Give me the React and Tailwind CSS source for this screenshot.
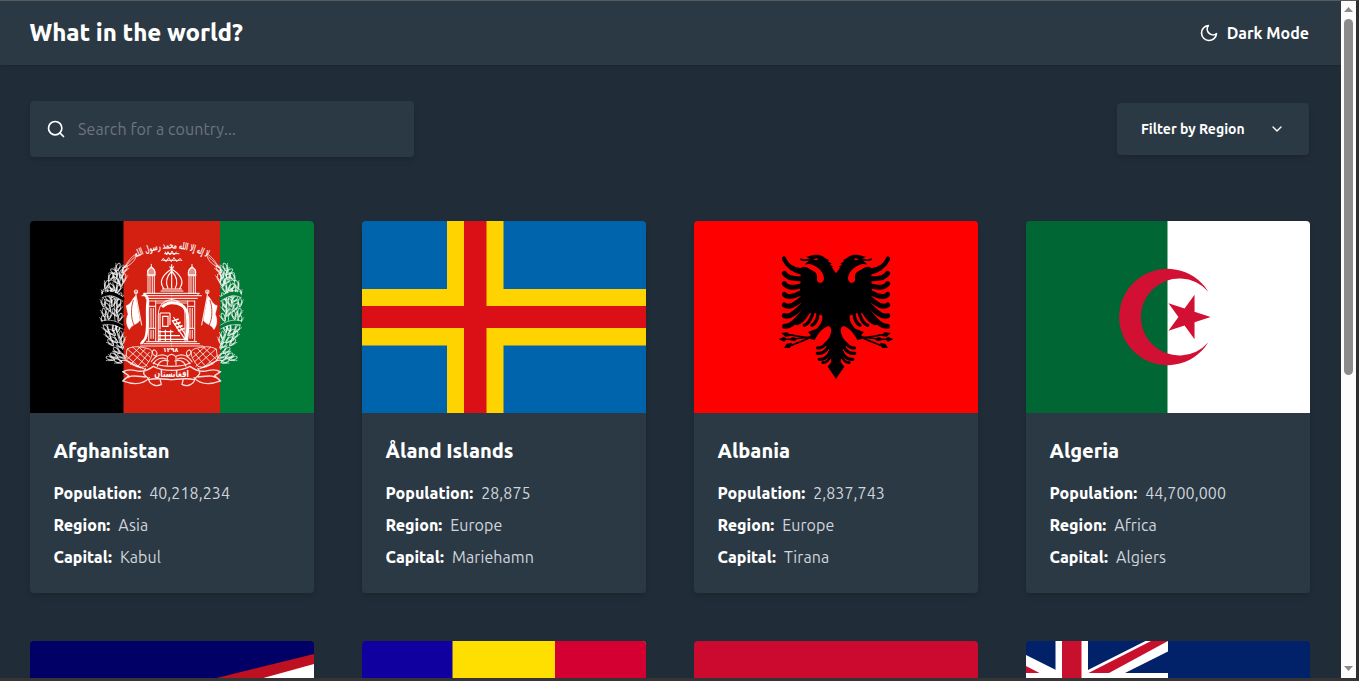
import React from "react";
import { Search, ChevronDown } from "lucide-react";
import { FiMoon } from "react-icons/fi";

function Sheaf({ mirror }) {
  const leaves = [
    [84, 126, 20], [72, 140, -50], [94, 146, 10], [62, 156, 25], [78, 166, -40], [94, 172, 10], [50, 178, 20], [66, 186, -40], [86, 190, 20],
    [42, 204, 10], [56, 222, -45], [40, 232, 0], [70, 232, 20], [88, 214, 30], [54, 246, -30], [86, 250, 20], [42, 262, -10], [74, 262, -30],
    [58, 270, 10], [90, 276, 20], [40, 284, -10], [48, 310, -30], [66, 322, -50], [84, 308, 10], [54, 330, -30], [72, 344, -50], [92, 330, 0],
    [62, 352, -40], [90, 360, -50], [80, 376, -50], [74, 306, 20], [70, 206, 20], [86, 234, 10], [72, 392, -60], [94, 392, -60],
    [102, 158, 10], [104, 132, 30], [76, 152, 0], [58, 196, 0], [98, 344, 0], [60, 400, -70], [84, 408, -70],
  ];
  return (
    <g transform={mirror ? "translate(490 0) scale(-1 1)" : undefined} fill="none" stroke="#fff" strokeOpacity="0.7" strokeWidth="3" strokeLinecap="round">
      {leaves.map(([x, y, r], i) => (
        <g key={i} transform={`translate(${x} ${y}) rotate(${r})`}>
          <ellipse rx="5" ry="12" />
          <path d="M-10 -8 L0 8 L10 -8 M-8 -1 L0 15 L8 -1" strokeWidth="2.4" />
        </g>
      ))}
      <path d="M104 124 C70 180 58 280 98 374" />
      <path d="M40 212 C58 199 78 208 98 222 M40 294 C60 288 80 294 98 306" stroke={mirror ? "#007a36" : "#000"} strokeOpacity="1" strokeWidth="11" />
      <path d="M36 202 C55 188 75 200 98 214 M36 218 C58 206 78 214 98 228 M36 287 C60 282 80 288 98 300 M38 300 C60 296 80 302 98 312" strokeWidth="2.5" />
    </g>
  );
}

function AfghanHalf() {
  return (
    <g fill="none" stroke="#fff" strokeOpacity="0.85" strokeWidth="3.4" strokeLinecap="round" strokeLinejoin="round">
      <path d="M174 205 V152 H193 V205 M180 155 V203 M187 155 V203 M171 150 H196 M174 150 C170 132 178 132 184 126 C190 132 198 134 194 150 M184 126 V118" />
      <path d="M174 150 C170 132 178 132 184 126 C190 132 198 134 194 150Z" fill="#fff" fillOpacity="0.5" />
      <path d="M162 205 H245 M156 212 H245 M168 220 H245 M176 228 H245 M166 205 V212" />
      <path d="M176 228 V350 M183 250 V308 M190 250 V308 M197 228 V350 M176 244 H197 M176 310 H197 M183 316 V340 M190 316 V340 M170 350 H245 M162 356 H245 M152 363 H245" />
      <path d="M205 350 V270 C205 238 225 226 245 224 M200 234 H222" />
      <path d="M138 200 V212 L155 300 M133 200 a5 5 0 1 1 10 0 a5 5 0 1 1 -10 0" />
      <path d="M137 212 C124 222 126 236 108 242 L114 268 C108 280 106 298 118 314 C128 296 142 300 150 286 Z" fill="#fff" strokeWidth="1" />
      <path d="M130 226 C122 248 122 280 132 300" stroke="#d32011" strokeWidth="3" />
      <path d="M104 128 C118 100 130 92 140 86 C138 104 128 116 104 128 C112 118 122 106 134 96" strokeWidth="2.6" />
      <path d="M112 372 C130 362 150 364 178 372 C196 380 182 404 166 424 C150 430 125 424 108 404 Z M112 372 L172 424 M128 366 L176 410 M146 366 L180 396 M106 390 L150 428 M166 372 L122 418 M150 366 L110 404 M178 382 L142 426" strokeWidth="2.8" />
      <path d="M92 408 C112 398 120 420 160 430 M100 440 C130 420 142 458 190 424 C204 432 222 436 245 436 M98 468 C120 446 140 454 166 456 M98 468 C130 480 160 478 178 458 M98 468 L116 452 L98 440 M176 464 C200 458 220 462 245 464 M166 430 C150 452 176 454 176 464 C180 480 200 486 214 478 L210 462 M245 424 C225 424 205 422 190 414" strokeWidth="4" />
      <path d="M184 410 C198 388 218 386 232 394 M190 416 C200 400 216 396 228 402 M202 424 C208 408 222 404 236 408 M196 394 C186 388 184 378 192 374 C202 378 204 388 196 394 M232 420 V396 C238 388 242 388 245 388" />
    </g>
  );
}

function Afghanistan() {
  return (
    <svg viewBox="0 0 284 192" className="block h-full w-full">
      <rect width="284" height="192" fill="#000" />
      <rect x="93.5" width="97" height="192" fill="#d32011" />
      <rect x="190" width="94" height="192" fill="#007a36" />
      <g transform="translate(60 4) scale(.33333)">
        <Sheaf />
        <Sheaf mirror />
        <AfghanHalf />
        <g transform="translate(490 0) scale(-1 1)"><AfghanHalf /></g>
        <g fill="none" stroke="#fff" strokeWidth="3.4">
          <path d="M222 192 C204 168 220 148 245 132 C270 148 286 168 268 192 Z M216 192 H276 M212 198 H280 M234 190 C224 170 234 150 245 138 M256 190 C266 170 256 150 245 138 M245 134 V190 M245 134 V118 M239 124 C241 132 249 132 251 124" />
          <path d="M160 207 C176 215 174 224 172 240 C170 280 176 320 166 340 C160 350 154 352 154 358" strokeWidth="8" />
          <path d="M216 246 C240 222 288 234 292 268 C294 300 296 320 288 346" strokeWidth="9" />
          <path d="M210 264 H240 M210 264 V312 M240 264 V300 M218 274 H234 V304 H218 Z M204 320 H250 M204 332 H270 M204 343 H284 M210 314 V348 M226 314 V348 M242 314 V348 M246 286 L286 344 M250 276 L290 334" />
          <path d="M248 288 L266 282 M252 298 L272 292 M258 308 L278 302 M264 318 L284 310" strokeWidth="5" />
          <path d="M222 86 H268 M226 80 L230 90 L234 80 L240 90 L246 78 L252 90 L260 80 M214 108 L220 100 L228 110 L236 98 L244 110 L252 98 L260 110 L270 100 L276 108 M218 106 H272" strokeWidth="2.8" />
        </g>
        <g fill="#fff" fontFamily="'DejaVu Sans', sans-serif" textAnchor="middle">
          <path id="emblem-arc" d="M136 98 Q245 42 354 98" fill="none" />
          <text fontSize="28" direction="rtl" textLength="224" lengthAdjust="spacingAndGlyphs" stroke="#fff" strokeWidth="0.8">
            <textPath href="#emblem-arc" startOffset="50%">لا إله إلا الله محمد رسول الله</textPath>
          </text>
          <text x="242" y="381" fontSize="19" fontWeight="bold">١٢٩٨</text>
          <text x="245" y="455" fontSize="28" fontWeight="bold" textLength="104" lengthAdjust="spacingAndGlyphs">افغانستان</text>
        </g>
      </g>
    </svg>
  );
}

function Aland() {
  return (
    <svg viewBox="0 0 284 192" className="block h-full w-full">
      <rect width="284" height="192" fill="#0064ad" />
      <path d="M85 0H141.500V192H85ZM0 68H284V124.500H0Z" fill="#ffd300" />
      <path d="M102 0H124.500V192H102ZM0 85H284V107H0Z" fill="#db0f16" />
    </svg>
  );
}

function EagleHalf() {
  return (
    <g>
      <path d="M199 100 C196 98 190 90 186 82 L190 80 L180 74 L185 70 L174 65 L177 60 L166 55 C158 46 144 42 130 45 C122 47 116 50 108 50 L120 55 L106 58 C98 58 94 53 89 57 C92 62 98 64 106 63 L117 62 C112 66 107 69 105 74 C112 71 121 72 128 75 C146 82 162 98 162 116 C161 127 152 131 145 127 C138 121 142 115 141 106 C139 96 128 92 118 86 C108 80 100 78 92 84 L92 120 L90 150 L94 190 L100 216 L112 222 C130 216 142 220 156 226 C160 238 154 252 140 266 L114 276 L122 284 L118 296 L134 300 C146 276 160 262 176 258 C188 262 184 280 178 292 C170 306 164 306 160 316 L176 322 L182 350 L184 366 L173 380 L199 418 Z" fill="#000" />
      <path d="M130 58 l10 -3 l5 3 l-7 3z" fill="#f00" />
      <g fill="none" stroke="#000" strokeLinecap="round">
        <path d="M42 55 C48 72 66 88 98 92 M42 58 C54 84 76 94 100 100" strokeWidth="12" />
        <path d="M43 100 C52 116 74 118 100 116" strokeWidth="15" />
        <path d="M43 131 C54 147 74 144 98 136" strokeWidth="15" />
        <path d="M43 163 C54 176 76 168 98 156" strokeWidth="15" />
        <path d="M43 195 C58 206 78 192 100 172" strokeWidth="15" />
        <path d="M43 227 C62 234 82 214 104 188" strokeWidth="15" />
        <path d="M44 259 C68 260 88 230 112 200" strokeWidth="15" />
        <path d="M80 250 C94 248 104 234 116 214" strokeWidth="12" />
        <path d="M103 256 C114 252 122 240 128 222" strokeWidth="10" />
        <path d="M126 256 C138 250 142 240 144 222" strokeWidth="10" />
        <path d="M142 324 C152 325 162 318 168 310" strokeWidth="9" />
        <path d="M142 340 C154 342 168 334 174 322" strokeWidth="10" />
        <path d="M148 358 C162 360 174 350 180 336" strokeWidth="10" />
        <path d="M158 368 C168 368 178 358 184 344" strokeWidth="8" />
        <path d="M126 290 C100 294 78 298 38 298 M126 290 C96 304 74 312 52 320 M126 294 C92 292 72 286 46 282" strokeWidth="5" />
      </g>
      <path d="M26 298 l16 -8 l8 8 l-8 7z M34 279 l18 -2 l10 11 l-16 2z M42 323 l8 -12 l16 -3 l-6 16z M66 291 l14 3 l-4 10 l-16 -3z" fill="#000" />
    </g>
  );
}

function Albania() {
  return (
    <svg viewBox="0 0 284 192" className="block h-full w-full">
      <rect width="284" height="192" fill="#f00" />
      <g transform="translate(76 19) scale(.33333)">
        <EagleHalf />
        <g transform="translate(396 0) scale(-1 1)"><EagleHalf /></g>
      </g>
    </svg>
  );
}

function Algeria() {
  return (
    <svg viewBox="0 0 284 192" className="block h-full w-full">
      <rect x="141" width="143" height="192" fill="#fff" />
      <rect width="141.500" height="192" fill="#006633" />
      <g transform="translate(74 29) scale(.33333)" fill="#d21034">
        <path d="M325 125 A144.500 144.500 0 1 0 325 277 A115.500 115.500 0 1 1 325 125Z" />
        <path d="M332 201 L283.600 216.700 L283.600 267.600 L253.700 226.400 L205.400 242.100 L235.300 201 L205.400 159.900 L253.700 175.600 L283.600 134.400 L283.600 185.300Z" />
      </g>
    </svg>
  );
}

function AmericanSamoa() {
  return (
    <svg viewBox="0 0 284 192" className="block h-full w-full">
      <rect width="284" height="192" fill="#000066" />
      <path d="M284 13 L0 83 L0 109 L284 179Z" fill="#bd1021" />
      <path d="M284 23 L20 96 L284 169Z" fill="#fff" />
    </svg>
  );
}

function Andorra() {
  return (
    <svg viewBox="0 0 284 192" className="block h-full w-full">
      <rect width="284" height="192" fill="#1000a0" />
      <rect x="90.500" width="193.500" height="192" fill="#fedf00" />
      <rect x="193" width="91" height="192" fill="#d50032" />
    </svg>
  );
}

function Angola() {
  return (
    <svg viewBox="0 0 284 192" className="block h-full w-full">
      <rect y="96" width="284" height="96" fill="#000" />
      <rect width="284" height="96" fill="#cc092f" />
    </svg>
  );
}

function Anguilla() {
  return (
    <svg viewBox="0 0 284 192" className="block h-full w-full">
      <rect width="284" height="192" fill="#012169" />
      <path d="M29.500 0H62V96H29.500ZM0 32H142V64H0Z" fill="#fff" />
      <path d="M119.500 0H142V10.500L99 32H56V32Z M0 14L36 32V48H0Z" fill="#fff" />
      <path d="M125 0H142L83 32H62.500Z M0 25L13.500 32H0Z" fill="#c8102e" />
      <path d="M36 0H55.500V96H36ZM0 38H142V58H0Z" fill="#c8102e" />
    </svg>
  );
}

const countries = [
  { name: "Afghanistan", population: "40,218,234", region: "Asia", capital: "Kabul", Flag: Afghanistan },
  { name: "Åland Islands", population: "28,875", region: "Europe", capital: "Mariehamn", Flag: Aland },
  { name: "Albania", population: "2,837,743", region: "Europe", capital: "Tirana", Flag: Albania },
  { name: "Algeria", population: "44,700,000", region: "Africa", capital: "Algiers", Flag: Algeria },
];

const nextFlags = [AmericanSamoa, Andorra, Angola, Anguilla];

function Detail({ label, value }) {
  return (
    <p className="flex gap-2 text-base whitespace-nowrap">
      <span className="font-[760] tracking-[-0.001em] text-white">{label}:</span>
      <span className="tracking-[0.005em] text-gray-300">{value}</span>
    </p>
  );
}

function CountryCard({ country }) {
  const { Flag } = country;
  return (
    <article className="overflow-hidden rounded bg-[#2b3944] shadow-md">
      <div className="h-48"><Flag /></div>
      <div className="py-6 pr-6 pl-[23.5px]">
        <h2 className="mb-4 text-xl leading-7 font-[760] text-white">{country.name}</h2>
        <div className="flex flex-col gap-2">
          <Detail label="Population" value={country.population} />
          <Detail label="Region" value={country.region} />
          <Detail label="Capital" value={country.capital} />
        </div>
      </div>
    </article>
  );
}

function Scrollbar() {
  return (
    <div className="flex w-[15px] shrink-0 flex-col items-center bg-[#fcfcfc]">
      <svg width="15" height="18" viewBox="0 0 15 18"><path d="M3 11L7.500 6L12 11Z" fill="#8b8b8b" /></svg>
      <div className="h-[356px] w-[9px] rounded-full bg-[#8b8b8b]" />
      <svg className="mt-auto" width="15" height="18" viewBox="0 0 15 18"><path d="M3 6L7.500 11L12 6Z" fill="#8b8b8b" /></svg>
    </div>
  );
}

export default function App() {
  return (
    <div className="flex h-[681px] w-[1359px] overflow-hidden border-t border-r-[3px] border-b-[3px] border-t-[#555a5c] border-r-[#2d2d2d] border-b-[#353535] bg-[#202c37] font-['Ubuntu','Noto_Sans',sans-serif]">
      <div className="min-w-0 flex-1 overflow-hidden">
        <header className="flex h-16 items-center justify-between bg-[#2b3944] pr-8 pl-[29.5px] text-white shadow-sm">
          <h1 className="text-2xl font-[760] tracking-[-0.002em] whitespace-nowrap">What in the world?</h1>
          <button className="flex items-center gap-2 text-base font-[600]">
            <FiMoon size={20} />
            <span className="whitespace-nowrap">Dark Mode</span>
          </button>
        </header>
        <main className="pt-9 pr-[31px] pl-[30px]">
          <div className="flex items-center justify-between pr-px">
            <label className="flex h-14 w-96 items-center gap-3 rounded bg-[#2b3944] px-4 shadow-md">
              <Search size={20} className="shrink-0 text-white" />
              <input className="w-full bg-transparent text-base tracking-[0.006em] outline-none placeholder:text-[#6b7480]" placeholder="Search for a country..." />
            </label>
            <button className="flex h-[52px] w-48 items-center justify-between rounded bg-[#2b3944] px-6 text-sm font-[600] text-white shadow-md">
              <span className="whitespace-nowrap">Filter by Region</span>
              <ChevronDown size={16} />
            </button>
          </div>
          <div className="mt-16 grid grid-cols-4 gap-12">
            {countries.map((country) => <CountryCard key={country.name} country={country} />)}
            {nextFlags.map((Flag, i) => (
              <div key={i} className="h-48 overflow-hidden rounded-t"><Flag /></div>
            ))}
          </div>
        </main>
      </div>
      <Scrollbar />
    </div>
  );
}
